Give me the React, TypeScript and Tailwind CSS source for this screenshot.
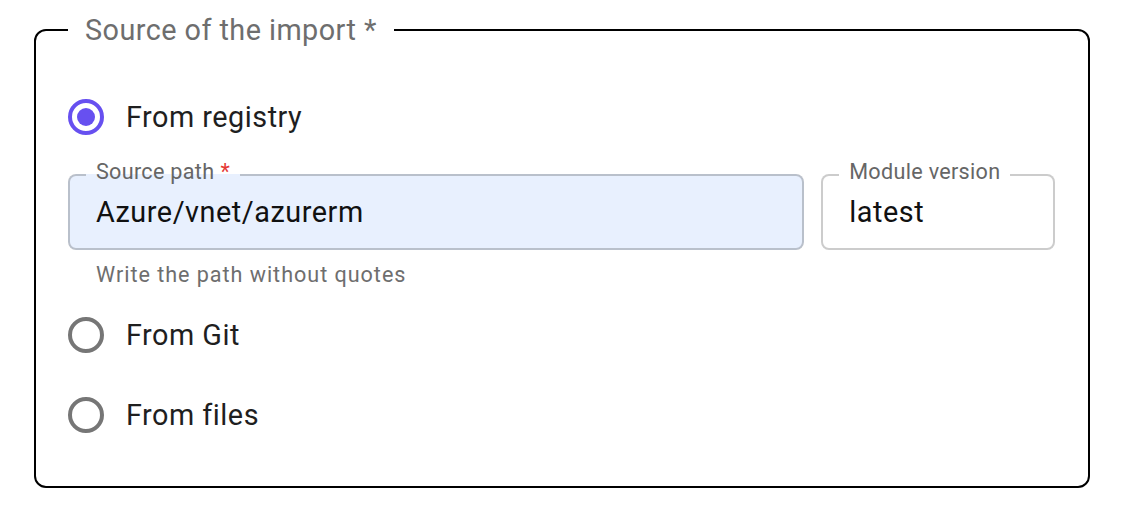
import React from "react";

const font = { fontFamily: "Roboto, 'Noto Sans', Arial, sans-serif" };

function Radio({ checked, label }: { checked?: boolean; label: string }) {
  return (
    <div className="flex h-[48px] items-center">
      <span
        className={
          "flex h-[36px] w-[36px] items-center justify-center rounded-full border-[4px] " +
          (checked ? "border-[#6750f0]" : "border-[#767676]")
        }
      >
        {checked && <span className="h-[18px] w-[18px] rounded-full bg-[#6750f0]" />}
      </span>
      <span className="ml-[22px] text-[28.8px] leading-[34px] tracking-[0.5px] text-[#1f1f1f]">
        {label}
      </span>
    </div>
  );
}

function Field({
  label,
  value,
  required,
  filled,
  className,
}: {
  label: string;
  value: string;
  required?: boolean;
  filled?: boolean;
  className?: string;
}) {
  return (
    <fieldset
      className={
        "m-0 min-w-0 rounded-[8px] border-2 border-[rgba(0,0,0,0.2)] px-[16px] pt-[5px] pb-[19px] " +
        (filled ? "bg-[#e8f0fe] " : "bg-white ") +
        (className ?? "")
      }
    >
      <legend className="px-[10px] pb-[6px] text-[21.6px] leading-[24px] tracking-[0.3px] text-[#666666]">
        {label}
        {required && <span className="ml-[6px] text-[#e53935]">*</span>}
      </legend>
      <div className="pl-[10px] text-[28.8px] leading-[34px] tracking-[0.55px] text-[#111111]">
        {value}
      </div>
    </fieldset>
  );
}

export default function App() {
  return (
    <div className="h-[526px] w-[1124px] bg-white px-[34px] pt-[12px]" style={font}>
      <fieldset className="m-0 h-[476px] min-w-0 rounded-[12px] border-2 border-black p-0">
        <legend className="ml-[32px] px-[17px] text-[28.8px] leading-[36px] tracking-[0.45px] text-[#6e6e6e]">
          Source of the import *
        </legend>
        <div className="px-[32px] pt-[45px]">
          <Radio checked label="From registry" />
          <div className="mt-[19px] flex gap-[17px] pr-[1px]">
            <Field className="w-[737px]" label="Source path" value="Azure/vnet/azurerm" required filled />
            <Field className="w-[234px]" label="Module version" value="latest" />
          </div>
          <div className="mt-[13px] pl-[28px] text-[21.6px] leading-[24px] tracking-[0.96px] text-[#6e6e6e]">
            Write the path without quotes
          </div>
          <div className="mt-[24px]">
            <Radio label="From Git" />
          </div>
          <div className="mt-[32px]">
            <Radio label="From files" />
          </div>
        </div>
      </fieldset>
    </div>
  );
}
